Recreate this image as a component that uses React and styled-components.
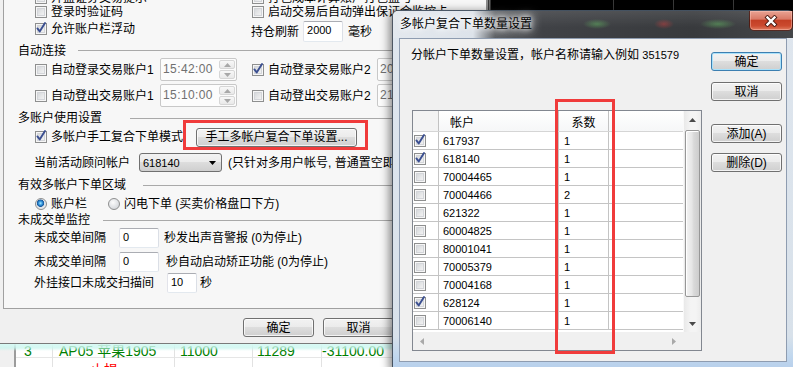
import styled, { createGlobalStyle, css } from "styled-components";

const GlobalStyle = createGlobalStyle`
  html, body { margin: 0; padding: 0; background: #000; }
  body {
    font-family: "Liberation Sans", "Noto Sans CJK SC", sans-serif;
    font-size: 12px;
    color: #000;
  }
  * { box-sizing: border-box; }
`;

const Desktop = styled.div`
  position: relative;
  width: 793px;
  height: 367px;
  overflow: hidden;
  background: #000;
`;

/* ---------- chart window behind ---------- */
const ChartWindow = styled.div`
  position: absolute;
  left: 488px;
  top: 0;
  width: 305px;
  height: 40px;
  background: #000;
`;

/* ---------- trade list behind ---------- */
const ListWindow = styled.div`
  position: absolute;
  left: 0;
  top: 336px;
  width: 488px;
  height: 44px;
  background: #fff;
`;

const ListRow = styled.div`
  display: grid;
  grid-template-columns: 16px 37px 122px 78px 69px 1fr;
  height: 22px;
  border-bottom: 1px solid #e6e6e6;
`;

const ListCell = styled.div`
  padding: ${(p) => p.$pt ?? 7}px 0 0 ${(p) => p.$pl ?? 4}px;
  font-size: 14px;
  line-height: 16px;
  white-space: nowrap;
  color: ${(p) => (p.$red ? "#ff0000" : "#008000")};
  border-right: 1px solid #e2e2e2;
  ${(p) =>
    p.$gutter &&
    css`
      background: #f0f0f0;
      border-right: 2px solid #9c9c9c;
    `}
`;

/* ---------- settings window ---------- */
const SettingsWindow = styled.div`
  position: absolute;
  left: 0;
  top: 0;
  width: 488px;
  height: 344px;
  display: flex;
  flex-direction: column;
  background: #f0f0f0;
  border-right: 2px solid #8c8c8c;
  border-bottom: 1px solid #7a7a7a;

  &::after {
    content: "";
    position: absolute;
    left: 0;
    right: 0;
    bottom: -8px;
    height: 7px;
    background: linear-gradient(rgba(215, 250, 244, 0.97), rgba(200, 245, 238, 0.75) 55%, rgba(200, 245, 238, 0));
  }
`;

const Page = styled.div`
  display: flex;
  flex-direction: column;
  flex: none;
  height: 309px;
  margin-left: 3px;
  overflow: hidden;
  background: #f7f7f7;
  border-left: 1px solid #a0a0a0;
  border-bottom: 1px solid #a0a0a0;
`;

const Row = styled.div`
  display: flex;
  align-items: center;
  flex: none;
  height: ${(p) => p.$h}px;
  margin-top: ${(p) => p.$mt || 0}px;
  padding-left: ${(p) => p.$pl ?? 31}px;
  white-space: nowrap;
`;

const Slot = styled.div`
  display: flex;
  align-items: center;
  flex: none;
  width: ${(p) => p.$w}px;
  margin-bottom: ${(p) => p.$mb || 0}px;
`;

const GroupRow = styled.div`
  display: flex;
  align-items: center;
  flex: none;
  height: ${(p) => p.$h}px;
  margin-top: ${(p) => p.$mt || 0}px;
  padding-left: 14px;
  white-space: nowrap;
`;

const GroupTitle = styled.span`
  flex: none;
  width: ${(p) => p.$w}px;
  line-height: 14px;
`;

const GroupRule = styled.span`
  flex: 1;
  height: 1px;
  background: #a9a9a9;
`;

const Text = styled.span`
  flex: none;
  width: ${(p) => (p.$w ? `${p.$w}px` : "auto")};
  margin-left: ${(p) => p.$ml || 0}px;
  line-height: 14px;
`;

const Num = styled.span`
  font-size: 11px;
`;

const CheckLabel = styled.span`
  display: flex;
  align-items: center;
  flex: none;
  width: ${(p) => (p.$w ? `${p.$w}px` : "auto")};
  line-height: 14px;
`;

const Box = styled.span`
  position: relative;
  flex: none;
  width: 12px;
  height: 12px;
  margin: 0 4px 0 ${(p) => p.$ml || 0}px;
  border: 1px solid #8e8f8f;
  background: linear-gradient(135deg, #cdd0d4 0%, #e9eaeb 60%, #f8f8f8 100%);
  box-shadow: inset 0 0 0 1px #f6f6f6, inset 0 0 0 2px #d3d5d9;

  svg {
    position: absolute;
    left: -1px;
    top: -3px;
    overflow: visible;
  }
`;

const RadioDot = styled.span`
  flex: none;
  width: 12px;
  height: 12px;
  margin-right: 4px;
  border-radius: 50%;
  border: 1px solid #8e8f8f;
  background: radial-gradient(circle at 40% 35%, #fbfbfb 0, #e2e4e7 50%, #c9ccd1 100%);
  ${(p) =>
    p.$on &&
    css`
      background: radial-gradient(
        circle at 45% 42%,
        #a8e8ff 0,
        #3a9be0 22%,
        #15579c 42%,
        #dfe3e8 50%,
        #f3f4f5 100%
      );
    `}
`;

const Field = styled.div`
  flex: none;
  width: ${(p) => p.$w}px;
  height: ${(p) => p.$h || 20}px;
  margin-left: ${(p) => p.$ml || 0}px;
  padding: 2px 0 0 3px;
  font-size: 11px;
  line-height: 13px;
  background: #fff;
  border: 1px solid;
  border-color: #abadb3 #dbdfe6 #e3e9ef #e2e3ea;
  border-radius: 2px;
`;

const Spin = styled.div`
  display: flex;
  flex: none;
  width: 77px;
  height: 23px;
  background: #fcfcfc;
  border: 1px solid #c8c8c8;
  border-radius: 2px;
`;

const SpinText = styled.span`
  flex: 1;
  padding: 4px 0 0 2px;
  font-size: 12px;
  line-height: 13px;
  letter-spacing: 0.4px;
  color: #707070;
`;

const SpinButtons = styled.div`
  display: flex;
  flex-direction: column;
  gap: 1px;
  width: 18px;
  padding: 1px;
`;

const SpinButton = styled.span`
  display: flex;
  align-items: center;
  justify-content: center;
  flex: 1;
  background: linear-gradient(#f8f8f8, #e9e9e9);
  border: 1px solid #d6d6d6;
  border-radius: 2px;
`;

const Button = styled.button`
  flex: none;
  width: ${(p) => p.$w || 71}px;
  height: 19px;
  margin-top: ${(p) => p.$mt || 0}px;
  padding: 0;
  font: inherit;
  font-size: 12px;
  line-height: 16px;
  color: #000;
  white-space: nowrap;
  border: 1px solid #707070;
  border-radius: 3px;
  background: linear-gradient(#f2f2f2 0%, #ebebeb 49%, #dddddd 50%, #cfcfcf 100%);
  box-shadow: inset 0 0 0 1px rgba(255, 255, 255, 0.75);
  ${(p) =>
    p.$focus &&
    css`
      border-color: #3c7fb1;
      box-shadow: inset 0 0 0 1px #a9e1fa;
    `}
`;

const Marked = styled.span`
  position: relative;
  display: flex;
  flex: none;
`;

const Mark = styled.span`
  position: absolute;
  left: ${(p) => p.$l}px;
  top: ${(p) => p.$t}px;
  width: ${(p) => p.$w}px;
  height: ${(p) => p.$h}px;
  border: 3px solid #f03b3b;
  pointer-events: none;
`;

const Combo = styled.div`
  display: flex;
  align-items: center;
  justify-content: space-between;
  flex: none;
  width: 83px;
  height: 19px;
  padding: 0 5px 0 3px;
  font-size: 11px;
  border: 1px solid #707070;
  border-radius: 3px;
  background: linear-gradient(#f2f2f2 0%, #ebebeb 49%, #dddddd 50%, #cfcfcf 100%);
`;

const Footer = styled.div`
  display: flex;
  gap: 9px;
  padding: 9px 0 0 243px;
`;

/* ---------- dialog ---------- */
const Dialog = styled.div`
  position: absolute;
  left: 392px;
  top: 10px;
  width: 402px;
  height: 361px;
  display: flex;
  flex-direction: column;
  border: 1px solid rgba(40, 50, 62, 0.8);
  border-radius: 6px 6px 0 0;
  background: linear-gradient(180deg, #dfe6ee 0, #d8e1ea 325px, #c1d7ee 345px, #b6cfeb 100%);
  box-shadow: -3px 1px 9px rgba(0, 0, 0, 0.45);
`;

const TitleBar = styled.div`
  display: flex;
  align-items: flex-start;
  flex: none;
  height: 27px;
  padding-left: 7px;
  border-radius: 5px 5px 0 0;
  background:
    linear-gradient(180deg, rgba(255, 255, 255, 0.1), transparent 60%),
    radial-gradient(14px 5px at 204px 13px, rgba(95, 175, 95, 0.55), transparent),
    radial-gradient(10px 5px at 271px 13px, rgba(185, 60, 60, 0.55), transparent),
    radial-gradient(18px 5px at 325px 13px, rgba(95, 175, 95, 0.55), transparent),
    linear-gradient(90deg, #e3e8ee 0, #dde3ea 80px, #a3a8ae 90px, #5a5d61 102px, #404246 150px, #383a3d 300px, #444649 100%);
`;

const Title = styled.span`
  margin-top: 6px;
  line-height: 14px;
  white-space: nowrap;
  text-shadow: 0 0 5px #fff, 0 0 9px #fff, 0 0 12px rgba(255, 255, 255, 0.9);
`;

const CloseButton = styled.div`
  display: flex;
  align-items: center;
  justify-content: center;
  flex: none;
  width: 44px;
  height: 20px;
  margin-left: auto;
  border: 1px solid rgba(60, 20, 15, 0.85);
  border-top: none;
  border-radius: 0 0 5px 5px;
  background: linear-gradient(180deg, #e9a393 0%, #d97a67 42%, #c33f25 50%, #cb4a2f 78%, #e17c60 100%);
  box-shadow: inset 0 0 0 1px rgba(255, 210, 200, 0.4);
`;

const FrameBody = styled.div`
  display: flex;
  flex: 1;
  padding: 0 6px 8px 6px;
`;

const Client = styled.div`
  display: flex;
  flex: 1;
  background: #f0f0f0;
  border: 1px solid #8e9cb0;
`;

const MainCol = styled.div`
  display: flex;
  flex-direction: column;
  padding-left: 11px;
`;

const Prompt = styled.div`
  margin-top: 9px;
  line-height: 14px;
  white-space: nowrap;
`;

const SideCol = styled.div`
  display: flex;
  flex-direction: column;
  margin-left: 9px;
`;

const ListBox = styled.div`
  position: relative;
  display: grid;
  grid-template-columns: 270px 18px;
  grid-template-rows: 221px 18px;
  width: 290px;
  height: 241px;
  margin: 48px 0 0 1px;
  background: #fff;
  border: 1px solid #828790;
`;

const DataArea = styled.div`
  display: flex;
  flex-direction: column;
  overflow: hidden;
`;

const gridCols = css`
  display: grid;
  grid-template-columns: 26px 120px 50px 1fr;
`;

const HeadRow = styled.div`
  ${gridCols};
  flex: none;
  height: 21px;
  background: linear-gradient(#ffffff, #f6f7f8);
  border-bottom: 1px solid #d5d5d5;
`;

const HeadCell = styled.div`
  display: flex;
  align-items: center;
  justify-content: ${(p) => (p.$center ? "center" : "flex-start")};
  padding-left: ${(p) => p.$pl || 0}px;
  background: ${(p) => (p.$blank ? "#f3f3f3" : "transparent")};
  border-right: 1px solid ${(p) => (p.$last ? "transparent" : "#c2c2c2")};
`;

const BodyRow = styled.div`
  ${gridCols};
  flex: none;
  height: 18px;
  border-bottom: 1px solid #c4c4c4;
`;

const BodyCell = styled.div`
  display: flex;
  align-items: center;
  padding-left: ${(p) => p.$pl ?? 4}px;
  font-size: 11px;
  border-right: 1px solid ${(p) => (p.$last ? "transparent" : "#c4c4c4")};
`;

const VScroll = styled.div`
  display: flex;
  flex-direction: column;
  background: linear-gradient(90deg, #e9e9e9, #f4f4f4 40%, #f4f4f4 70%, #ececec);
  border-left: 1px solid #f9f9f9;
`;

const ArrowCell = styled.div`
  display: flex;
  align-items: center;
  justify-content: center;
  flex: none;
  height: 17px;
  margin-top: ${(p) => (p.$bottom ? "auto" : "0")};
`;

const Thumb = styled.div`
  flex: none;
  height: 167px;
  margin: 2px 1px 0 1px;
  border: 1px solid #979797;
  border-radius: 2px;
  background: linear-gradient(90deg, #f4f4f4, #e6e6e6 45%, #d9d9d9 60%, #cdcdcd);
  box-shadow: inset 1px 1px 0 #fff;
`;

const HScroll = styled.div`
  display: flex;
  align-items: center;
  justify-content: space-between;
  padding: 0 7px;
  background: #f0f0f0;
`;

const Corner = styled.div`
  background: #f0f0f0;
`;

/* ---------- drawings ---------- */
const Tick = () => (
  <svg width="12" height="13" viewBox="0 0 12 13">
    <path
      d="M2.4 7.4 L4.7 10.4 L10 2"
      fill="none"
      stroke="#3b4f91"
      strokeWidth="1.9"
      strokeLinecap="round"
      strokeLinejoin="round"
    />
  </svg>
);

const Tri = ({ dir, color = "#4a4a4a" }) => {
  const d = {
    up: "M0 4 L3.5 0 L7 4 Z",
    down: "M0 0 L7 0 L3.5 4 Z",
    left: "M4 0 L4 7 L0 3.5 Z",
    right: "M0 0 L4 3.5 L0 7 Z",
  }[dir];
  const vertical = dir === "up" || dir === "down";
  return (
    <svg width={vertical ? 7 : 4} height={vertical ? 4 : 7} viewBox={vertical ? "0 0 7 4" : "0 0 4 7"}>
      <path d={d} fill={color} />
    </svg>
  );
};

const CheckItem = ({ label, checked, w }) => (
  <CheckLabel $w={w}>
    <Box>{checked && <Tick />}</Box>
    {label}
  </CheckLabel>
);

const RadioItem = ({ label, on, w }) => (
  <CheckLabel $w={w}>
    <RadioDot $on={on} />
    {label}
  </CheckLabel>
);

const TimeSpin = ({ value }) => (
  <Spin>
    <SpinText>{value}</SpinText>
    <SpinButtons>
      <SpinButton>
        <Tri dir="up" color="#a8a8a8" />
      </SpinButton>
      <SpinButton>
        <Tri dir="down" color="#a8a8a8" />
      </SpinButton>
    </SpinButtons>
  </Spin>
);

const Group = ({ title, w, h, mt }) => (
  <GroupRow $h={h} $mt={mt}>
    <GroupTitle $w={w}>{title}</GroupTitle>
    <GroupRule />
  </GroupRow>
);

const accounts = [
  ["617937", 1, true],
  ["618140", 1, true],
  ["70004465", 1],
  ["70004466", 2],
  ["621322", 1],
  ["60004825", 1],
  ["80001041", 1],
  ["70005379", 1],
  ["70004168", 1],
  ["628124", 1, true],
  ["70006140", 1],
];

const App = () => (
  <>
    <GlobalStyle />
    <Desktop>
      <ChartWindow>
        <svg width="305" height="40">
          <line x1="1.5" y1="0" x2="1.5" y2="40" stroke="#6e6e6e" strokeWidth="2" />
          {[125, 185, 245].map((x) => (
            <line key={x} x1={x + 0.5} y1="0" x2={x + 0.5} y2="40" stroke="#3a3a3a" />
          ))}
        </svg>
      </ChartWindow>

      <ListWindow>
        <ListRow>
          <ListCell $gutter />
          <ListCell $pl={8}>3</ListCell>
          <ListCell $pl={6}>AP05 苹果1905</ListCell>
          <ListCell $pl={5}>11000</ListCell>
          <ListCell $pl={4}>11289</ListCell>
          <ListCell $pl={0}>-31100.00</ListCell>
        </ListRow>
        <ListRow>
          <ListCell $gutter />
          <ListCell />
          <ListCell $pl={37} $pt={4} $red>
            止损
          </ListCell>
          <ListCell />
          <ListCell />
          <ListCell />
        </ListRow>
      </ListWindow>

      <SettingsWindow>
        <Page>
          <Row $h={12} $mt={-8}>
            <Slot $w={217}>
              <CheckItem label="开盘证券交易提示" />
            </Slot>
            <CheckItem label="打包成本计算账户打包盈亏" />
          </Row>
          <Row $h={16}>
            <Slot $w={217}>
              <CheckItem label="登录时验证码" />
            </Slot>
            <CheckItem label="启动交易后自动弹出保证金监控卡" />
          </Row>
          <Row $h={23}>
            <Slot $w={216} $mb={5}>
              <CheckItem checked label="允许账户栏浮动" />
            </Slot>
            <Text>持仓刷新</Text>
            <Field $w={40} $h={21} $ml={4}>
              2000
            </Field>
            <Text $ml={5}>毫秒</Text>
          </Row>
          <Group title="自动连接" w={60} h={15} />
          <Row $h={23}>
            <Slot $w={217}>
              <CheckItem w={125} label="自动登录交易账户1" />
              <TimeSpin value="15:42:00" />
            </Slot>
            <CheckItem w={125} checked label="自动登录交易账户2" />
            <TimeSpin value="20:50:00" />
          </Row>
          <Row $h={23} $mt={3}>
            <Slot $w={217}>
              <CheckItem w={125} label="自动登出交易账户1" />
              <TimeSpin value="15:10:00" />
            </Slot>
            <CheckItem w={125} label="自动登出交易账户2" />
            <TimeSpin value="21:00:00" />
          </Row>
          <Group title="多账户使用设置" w={112} h={16} mt={3} />
          <Row $h={22}>
            <CheckItem w={161} checked label="多帐户手工复合下单模式" />
            <Marked>
              <Button $w={161}>手工多帐户复合下单设置...</Button>
              <Mark $l={-13} $t={-8} $w={185} $h={30} />
            </Marked>
          </Row>
          <Row $h={19} $mt={5} $pl={30}>
            <Text $w={105}>当前活动顾问帐户</Text>
            <Combo>
              618140
              <Tri dir="down" color="#000" />
            </Combo>
            <Text $ml={6}>(只针对多用户帐号, 普通置空即可)</Text>
          </Row>
          <Group title="有效多帐户下单区域" w={125} h={16} mt={5} />
          <Row $h={16} $mt={3}>
            <RadioItem w={73} on label="账户栏" />
            <RadioItem label="闪电下单 (买卖价格盘口下方)" />
          </Row>
          <Group title="未成交单监控" w={85} h={16} />
          <Row $h={20} $pl={30}>
            <Text $w={85}>未成交单间隔</Text>
            <Field $w={40}>0</Field>
            <Text $ml={5}>秒发出声音警报 (0为停止)</Text>
          </Row>
          <Row $h={20} $mt={4} $pl={30}>
            <Text $w={85}>未成交单间隔</Text>
            <Field $w={40}>0</Field>
            <Text $ml={7}>秒自动启动矫正功能 (0为停止)</Text>
          </Row>
          <Row $h={20} $mt={1} $pl={30}>
            <Text $w={133}>外挂接口未成交扫描间</Text>
            <Field $w={30}>10</Field>
            <Text $ml={3}>秒</Text>
          </Row>
        </Page>
        <Footer>
          <Button>确定</Button>
          <Button>取消</Button>
        </Footer>
      </SettingsWindow>

      <Dialog>
        <TitleBar>
          <Title>多帐户复合下单数量设置</Title>
          <CloseButton>
            <svg width="14" height="12" viewBox="0 0 14 12">
              <path d="M3.5 2.5 L10.5 9.5 M10.5 2.5 L3.5 9.5" stroke="#4a1a12" strokeWidth="4.2" strokeLinecap="square" />
              <path d="M3.5 2.5 L10.5 9.5 M10.5 2.5 L3.5 9.5" stroke="#fff" strokeWidth="2.4" strokeLinecap="square" />
            </svg>
          </CloseButton>
        </TitleBar>
        <FrameBody>
          <Client>
            <MainCol>
              <Prompt>
                分帐户下单数量设置，帐户名称请输入例如 <Num>351579</Num>
              </Prompt>
              <ListBox>
                <DataArea>
                  <HeadRow>
                    <HeadCell $blank />
                    <HeadCell $pl={11}>帐户</HeadCell>
                    <HeadCell $center>系数</HeadCell>
                    <HeadCell $last />
                  </HeadRow>
                  {accounts.map(([id, k, on]) => (
                    <BodyRow key={id}>
                      <BodyCell $pl={0}>
                        <Box $ml={1}>{on && <Tick />}</Box>
                      </BodyCell>
                      <BodyCell>{id}</BodyCell>
                      <BodyCell $pl={5}>{k}</BodyCell>
                      <BodyCell $last />
                    </BodyRow>
                  ))}
                </DataArea>
                <VScroll>
                  <ArrowCell>
                    <Tri dir="up" />
                  </ArrowCell>
                  <Thumb />
                  <ArrowCell $bottom>
                    <Tri dir="down" />
                  </ArrowCell>
                </VScroll>
                <HScroll>
                  <Tri dir="left" color="#a9a9a9" />
                  <Tri dir="right" color="#a9a9a9" />
                </HScroll>
                <Corner />
                <Mark $l={142} $t={-12} $w={60} $h={255} />
              </ListBox>
            </MainCol>
            <SideCol>
              <Button $focus $mt={13}>
                确定
              </Button>
              <Button $mt={11}>取消</Button>
              <Button $mt={23}>添加(A)</Button>
              <Button $mt={10}>删除(D)</Button>
            </SideCol>
          </Client>
        </FrameBody>
      </Dialog>
    </Desktop>
  </>
);

export default App;
